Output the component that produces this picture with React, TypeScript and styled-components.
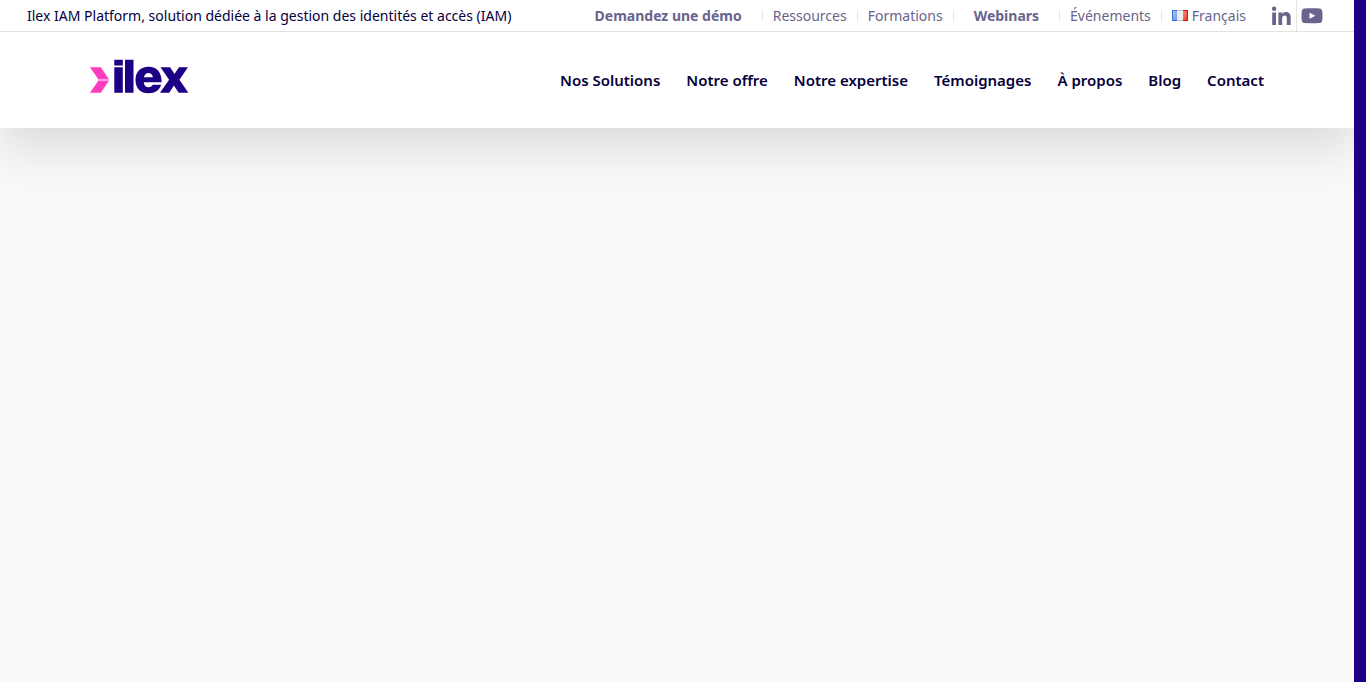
import React from "react";
import styled, { createGlobalStyle } from "styled-components";

const GlobalStyle = createGlobalStyle`
  *, *::before, *::after { box-sizing: border-box; }
  body {
    margin: 0;
    background: #f9f9f9;
    color: #05003c;
    font-family: "Noto Sans", "Open Sans", sans-serif;
  }
`;

const Page = styled.div`
  display: flex;
  min-height: 100vh;
`;

const Content = styled.div`
  flex: 1;
  min-width: 0;
  overflow: hidden;
`;

const ScrollTrack = styled.div`
  flex: none;
  width: 12px;
  background: #1d0084;
`;

const Header = styled.header`
  background: #fff;
  box-shadow: 0 20px 50px 0 rgba(0, 0, 0, 0.125);
`;

const TopBar = styled.div`
  display: flex;
  align-items: center;
  height: 32px;
  padding: 0 27px;
  border-bottom: 1px solid #e1e1e1;
  font-size: 14px;
  line-height: 20px;
  white-space: nowrap;
`;

const Tagline = styled.p`
  margin: 0 auto 0 0;
`;

const SecondaryNav = styled.nav`
  margin-right: 10px;
`;

const SecondaryList = styled.ul`
  display: flex;
  margin: 0;
  padding: 0;
  list-style: none;
`;

const SecondaryItem = styled.li`
  display: flex;
  align-items: center;
  height: 31px;

  & + &::before {
    content: "";
    width: 1px;
    height: 11px;
    background: #e6e6e6;
  }
`;

const SecondaryLink = styled.a<{ $strong?: boolean }>`
  display: flex;
  align-items: center;
  gap: 4px;
  padding: ${({ $strong }) => ($strong ? "0 20px" : "0 10px")};
  color: #69648b;
  font-weight: ${({ $strong }) => ($strong ? 700 : 400)};
  text-decoration: none;
`;

const SocialList = styled.ul`
  display: flex;
  margin: 0;
  padding: 0;
  list-style: none;
`;

const SocialItem = styled.li`
  & + & { border-left: 1px solid #e6e6e6; }
`;

const SocialLink = styled.a`
  display: flex;
  align-items: center;
  justify-content: center;
  width: 30px;
  height: 31px;
  color: #69648b;
`;

const MainBar = styled.div`
  display: flex;
  align-items: center;
  justify-content: space-between;
  max-width: 1200px;
  height: 96px;
  margin: 0 auto;
  padding: 0 13px;
`;

const LogoLink = styled.a`
  display: block;
  line-height: 0;
`;

const MainList = styled.ul`
  display: flex;
  gap: 26px;
  margin: 0;
  padding: 0;
  list-style: none;
`;

const MainLink = styled.a`
  color: #05003c;
  font-size: 15px;
  font-weight: 600;
  line-height: 22px;
  text-decoration: none;
  white-space: nowrap;
`;

const Logo = () => (
  <svg width="98" height="42" viewBox="0 0 98 42" role="img" aria-label="Ilex">
    <path fill="#ffc4ec" d="M8 20h10.800v2H8z" />
    <g fill="#ff3cbe">
      <path d="M0 8.200h10.800L18.900 20.300H8.300z" />
      <path d="M8.300 21.700H18.900L10.800 33.800H0z" />
    </g>
    <g fill="#1d0084">
      <path d="M24.300.8h8.500v5.600h-8.500zM24.300 8.200h8.500v25.600h-8.500zM35 .8h8.500v33H35z" />
      <path
        fillRule="evenodd"
        d="M71.600 23.200H53.800c.2 3.300 2 5 4.800 5 2 0 3.400-.8 4.100-2.400h8.400c-1.400 5.300-6 8.500-12.600 8.500C50.400 34.300 45.500 29.300 45.500 21 45.500 12.700 50.600 7.700 58.500 7.700c8.500 0 13.200 5.400 13.100 15.500zM54 18.300h8.900c-.3-2.800-1.900-4.400-4.400-4.400-2.500 0-4.100 1.600-4.500 4.400z"
      />
      <path d="M70.500 8.200h9.600l4.400 6.900 4.400-6.900H98l-8.600 12.500L98.300 33.800h-9.600l-4.800-7.300-4.700 7.300H70l9.100-13.100z" />
    </g>
  </svg>
);

const FrenchFlag = () => (
  <svg width="16" height="11" viewBox="0 0 16 11" aria-hidden="true">
    <defs>
      <linearGradient id="flagBlue" x1="0" y1="0" x2="1" y2="1">
        <stop offset="0" stopColor="#a9c4f5" />
        <stop offset="1" stopColor="#6d97e8" />
      </linearGradient>
      <linearGradient id="flagRed" x1="0" y1="0" x2="1" y2="1">
        <stop offset="0" stopColor="#ff8d84" />
        <stop offset="1" stopColor="#f0382d" />
      </linearGradient>
    </defs>
    <path fill="#3c70d6" d="M0 0h5v11H0z" />
    <path fill="#c0c4cc" d="M5 0h6v11H5z" />
    <path fill="#e0120b" d="M11 0h5v11h-5z" />
    <path fill="url(#flagBlue)" d="M1 1h4v9H1z" />
    <path fill="#ececec" d="M5 1h6v9H5z" />
    <path fill="url(#flagRed)" d="M11 1h4v9h-4z" />
  </svg>
);

const LinkedInIcon = () => (
  <svg width="20" height="20" viewBox="0 0 20 20" fill="currentColor" aria-hidden="true">
    <circle cx="3.100" cy="2.800" r="2.200" />
    <path d="M1.200 6.400H5v12.500H1.200zM7.400 6.400h3.700v1.700c.7-1.300 2-2 3.700-2 3.700 0 4.900 2.200 4.900 5.700v7.100h-3.900v-6.500c0-2-.5-3-2.100-3-1.700 0-2.500 1.200-2.500 3.100v6.400H7.400z" />
  </svg>
);

const YouTubeIcon = () => (
  <svg width="22" height="16" viewBox="0 0 22 16" aria-hidden="true">
    <path
      fill="currentColor"
      fillRule="evenodd"
      d="M11 .3c3 0 5.500.1 7.600.3 1.500.2 2.500 1.300 2.700 2.800.3 3 .3 5.800 0 8.800-.2 1.500-1.200 2.600-2.700 2.800-4.800.4-10.400.4-15.200 0C1.900 14.800.9 13.700.7 12.200c-.3-3-.3-5.800 0-8.800C.9 1.900 1.900.8 3.400.6 5.500.4 8 .3 11 .3zM8.500 4.800v6l6-3z"
    />
  </svg>
);

const secondaryLinks = [
  { label: "Demandez une démo", strong: true },
  { label: "Ressources" },
  { label: "Formations" },
  { label: "Webinars", strong: true },
  { label: "Événements" },
  { label: "Français", flag: true },
];

const mainLinks = [
  "Nos Solutions",
  "Notre offre",
  "Notre expertise",
  "Témoignages",
  "À propos",
  "Blog",
  "Contact",
];

export default function App() {
  return (
    <Page>
      <GlobalStyle />
      <Content>
        <Header>
          <TopBar>
            <Tagline>Ilex IAM Platform, solution dédiée à la gestion des identités et accès (IAM)</Tagline>
            <SecondaryNav aria-label="Navigation secondaire">
              <SecondaryList>
                {secondaryLinks.map(({ label, strong, flag }) => (
                  <SecondaryItem key={label}>
                    <SecondaryLink href="#" $strong={strong}>
                      {flag && <FrenchFlag />}
                      {label}
                    </SecondaryLink>
                  </SecondaryItem>
                ))}
              </SecondaryList>
            </SecondaryNav>
            <SocialList>
              <SocialItem>
                <SocialLink href="#" aria-label="LinkedIn"><LinkedInIcon /></SocialLink>
              </SocialItem>
              <SocialItem>
                <SocialLink href="#" aria-label="YouTube"><YouTubeIcon /></SocialLink>
              </SocialItem>
            </SocialList>
          </TopBar>
          <MainBar>
            <LogoLink href="#"><Logo /></LogoLink>
            <nav aria-label="Navigation principale">
              <MainList>
                {mainLinks.map((label) => (
                  <li key={label}><MainLink href="#">{label}</MainLink></li>
                ))}
              </MainList>
            </nav>
          </MainBar>
        </Header>
        <main />
      </Content>
      <ScrollTrack />
    </Page>
  );
}
